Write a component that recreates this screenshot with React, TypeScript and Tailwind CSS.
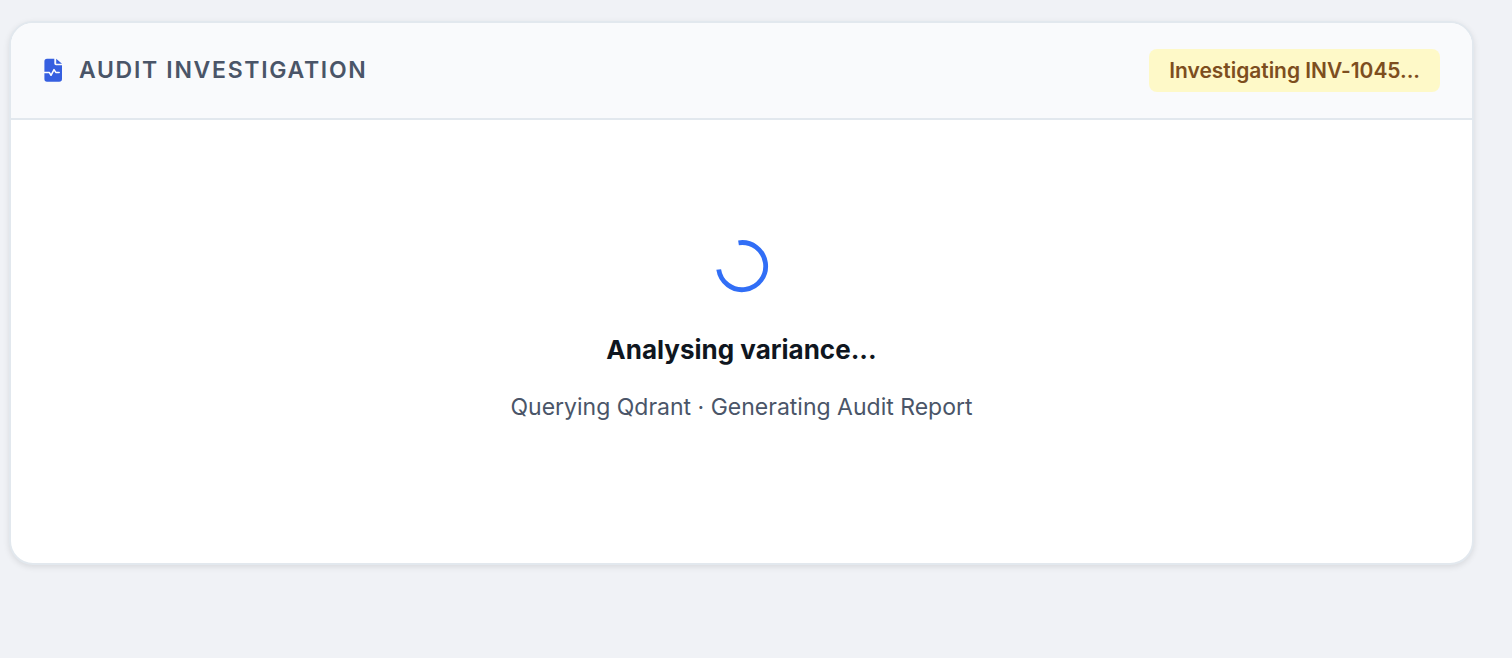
export default function App() {
  return (
    <main className="h-[658px] overflow-hidden bg-[#f0f2f6] pt-[21px] pl-[9px] font-['Inter',sans-serif]">
      <section className="flex h-[544px] w-[1465px] flex-col overflow-hidden rounded-[24px] border-2 border-[#e2e8ee] bg-white shadow-[0_2px_6px_rgba(0,0,0,0.1)]">
        <header className="flex h-[97px] items-center justify-between border-b-2 border-[#e2e8ee] bg-[#f9fafc] px-8 pb-px">
          <div className="flex items-center gap-4">
            <svg viewBox="0 0 20 24" className="h-6 w-5">
              <path fill="#365fe0" d="M4 0.7H11.3V5.5Q11.3 7.3 13 7.3H19V21Q19 23.8 16.2 23.8H4Q1.4 23.8 1.4 21V3.5Q1.4 0.7 4 0.7ZM13.2 0.7L19 5.8H13.2Z" />
              <path fill="none" stroke="#fff" strokeWidth="1.5" strokeLinejoin="round" strokeLinecap="round" d="M1.4 14.4H6.3L8 17.3L11 11.6L12.8 14.4H16.2" />
            </svg>
            <h1 className="text-[23px] leading-8 font-semibold tracking-[1.7px] text-[#4a5568]">AUDIT INVESTIGATION</h1>
          </div>
          <span className="rounded-lg bg-[#fef9c8] px-5 pt-[6px] pb-[5px] text-[21px] leading-8 font-semibold tracking-[-0.04px] text-[#7d4e1e]">Investigating INV-1045...</span>
        </header>
        <div className="flex flex-1 flex-col items-center pt-[119px]">
          <svg viewBox="0 0 54 54" className="h-[54px] w-[54px]">
            <path d="M23.5 3.8A23.6 23.6 0 1 1 3.7 30.5" fill="none" stroke="#316ef6" strokeWidth="4.8" />
          </svg>
          <h2 className="mt-[37px] text-[26px] leading-10 font-bold text-[#0f1620]">Analysing variance...</h2>
          <p className="mt-[21px] text-[23px] leading-8 text-[#4a5568]">Querying Qdrant · Generating Audit Report</p>
        </div>
      </section>
    </main>
  );
}
